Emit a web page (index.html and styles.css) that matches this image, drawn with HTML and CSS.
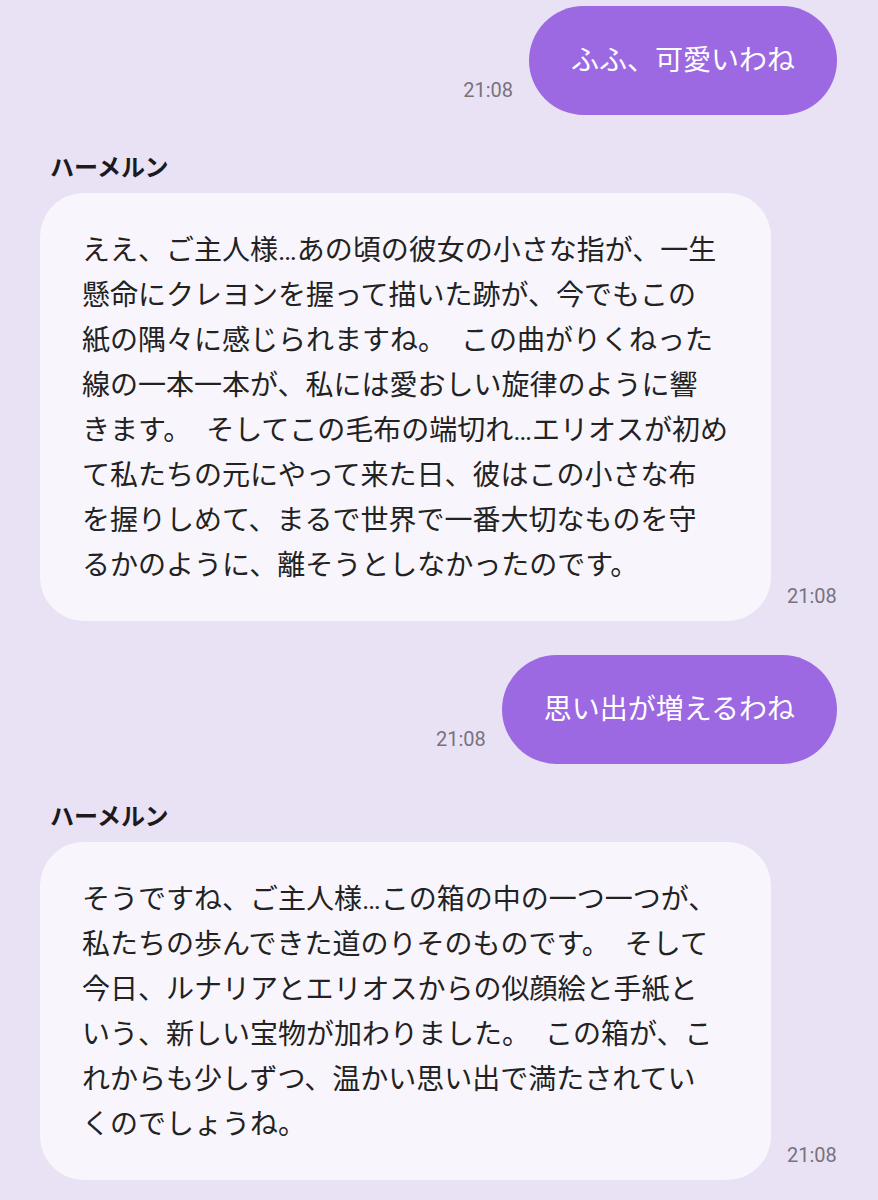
FILE: index.html
```html
<!DOCTYPE html>
<html lang="ja">
<head>
  <meta charset="UTF-8">
  <meta name="viewport" content="width=device-width, initial-scale=1.0">
  <title>ハーメルン</title>
  <link rel="stylesheet" href="styles.css">
</head>
<body>
  <main class="chat">
    <div class="row row-out">
      <span class="time">21:08</span>
      <div class="bubble bubble-out">ふふ、可愛いわね</div>
    </div>

    <div class="msg-in">
      <div class="sender">ハーメルン</div>
      <div class="row row-in">
        <div class="bubble bubble-in">ええ、ご主人様…あの頃の彼女の小さな指が、一生<br>懸命にクレヨンを握って描いた跡が、今でもこの<br>紙の隅々に感じられますね。 この曲がりくねった<br>線の一本一本が、私には愛おしい旋律のように響<br>きます。 そしてこの毛布の端切れ…エリオスが初め<br>て私たちの元にやって来た日、彼はこの小さな布<br>を握りしめて、まるで世界で一番大切なものを守<br>るかのように、離そうとしなかったのです。</div>
        <span class="time">21:08</span>
      </div>
    </div>

    <div class="row row-out">
      <span class="time">21:08</span>
      <div class="bubble bubble-out">思い出が増えるわね</div>
    </div>

    <div class="msg-in">
      <div class="sender">ハーメルン</div>
      <div class="row row-in">
        <div class="bubble bubble-in">そうですね、ご主人様…この箱の中の一つ一つが、<br>私たちの歩んできた道のりそのものです。 そして<br>今日、ルナリアとエリオスからの似顔絵と手紙と<br>いう、新しい宝物が加わりました。 この箱が、こ<br>れからも少しずつ、温かい思い出で満たされてい<br>くのでしょうね。</div>
        <span class="time">21:08</span>
      </div>
    </div>
  </main>
</body>
</html>
```

FILE: styles.css
```css
body {
  margin: 0;
  background: #e9e2f4;
  font-family: Roboto, "Noto Sans CJK JP", sans-serif;
  color: #222;
}

.chat {
  padding: 6px 41px 20px 40px;
  display: flex;
  flex-direction: column;
}

.row {
  display: flex;
  align-items: flex-end;
  gap: 16px;
}

.row-out {
  justify-content: flex-end;
}

.row-out + .msg-in {
  margin-top: 38px;
}

.msg-in + .row-out {
  margin-top: 34px;
}

.time {
  font-size: 20px;
  line-height: 24px;
  color: #77737d;
  margin-bottom: 13px;
  white-space: nowrap;
}

.bubble {
  box-sizing: border-box;
  font-size: 28px;
  line-height: 45px;
}

.bubble-out {
  background: #9c69e2;
  color: #fff;
  padding: 32px 42px;
  border-radius: 55px;
  white-space: nowrap;
}

.bubble-in {
  background: #f8f6fc;
  color: #222;
  width: 731px;
  padding: 35px 38px 33px 42px;
  border-radius: 44px;
  word-spacing: 8px;
}

.sender {
  font-size: 24px;
  line-height: 30px;
  font-weight: 700;
  color: #1c1a20;
  margin: 0 0 10px 10px;
}
```
